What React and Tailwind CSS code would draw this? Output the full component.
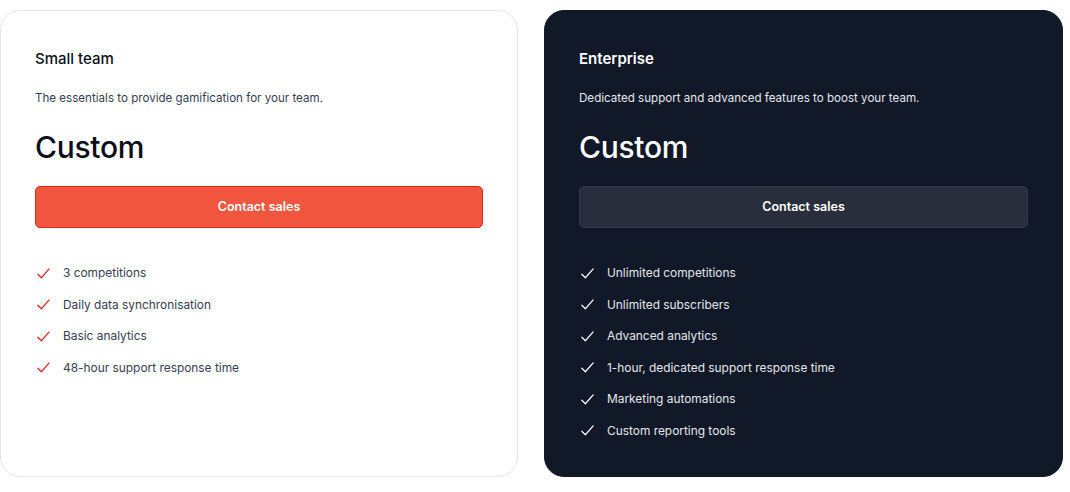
import React from "react";

function Check({ className }) {
  return (
    <svg viewBox="0 0 24 24" width="17" height="17" fill="none" stroke="currentColor" strokeWidth="1.7" strokeLinecap="round" strokeLinejoin="round" className={className}>
      <path d="M20 5.5 9 18l-5-5" />
    </svg>
  );
}

function Card({ dark, title, desc, items }) {
  return (
    <div
      className={
        "flex flex-col rounded-[20px] border px-[34px] pt-[38px] h-[467px] " +
        (dark ? "bg-[#111827] border-[#111827] w-[519px]" : "bg-white border-[#e6e6e6] w-[518px]")
      }
    >
      <div className={"h-[20px] leading-[20px] text-[15px] " + (dark ? "text-white font-semibold" : "text-[#0b0f1a] font-medium")}>
        {title}
      </div>
      <div className={"mt-[20px] h-[18px] leading-[18px] text-[11.6px] " + (dark ? "text-[#e5e7eb]" : "text-[#374151]")}>
        {desc}
      </div>
      <div className={"mt-[22px] h-[36px] leading-[36px] text-[30px] font-medium tracking-[-0.3px] " + (dark ? "text-white" : "text-[#0b0f1a]")}>
        Custom
      </div>
      <button
        className={
          "mt-[21px] h-[42px] w-full rounded-[5px] border text-[12.5px] font-semibold " +
          (dark ? "bg-[#282e3b] border-[#333a47] text-white" : "bg-[#f2563e] border-[#d9291c] text-white")
        }
      >
        Contact sales
      </button>
      <ul className="mt-[35px] flex flex-col gap-[11.6px]">
        {items.map((it) => (
          <li key={it} className="flex h-[20px] items-center">
            <Check className={"ml-[0px] " + (dark ? "text-white" : "text-[#dc2626]")} />
            <span className={"ml-[11px] text-[11.9px] " + (dark ? "text-[#e5e7eb]" : "text-[#374151]")}>{it}</span>
          </li>
        ))}
      </ul>
    </div>
  );
}

export default function App() {
  return (
    <div className="w-[1070px] h-[492px] bg-white pt-[10px] flex gap-[26px]" style={{ fontFamily: "Inter, 'Noto Sans', sans-serif" }}>
      <Card
        title="Small team"
        desc="The essentials to provide gamification for your team."
        items={["3 competitions", "Daily data synchronisation", "Basic analytics", "48-hour support response time"]}
      />
      <Card
        dark
        title="Enterprise"
        desc="Dedicated support and advanced features to boost your team."
        items={[
          "Unlimited competitions",
          "Unlimited subscribers",
          "Advanced analytics",
          "1-hour, dedicated support response time",
          "Marketing automations",
          "Custom reporting tools",
        ]}
      />
    </div>
  );
}
